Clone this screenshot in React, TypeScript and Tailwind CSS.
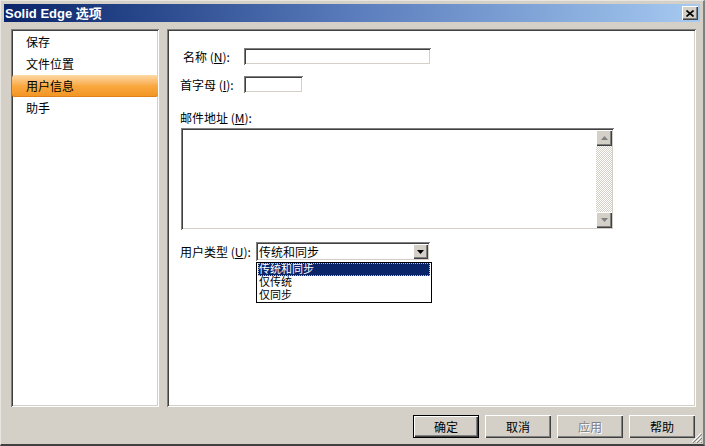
import React from "react";

const cjk = { fontFamily: "'Noto Sans CJK SC', 'Liberation Sans', sans-serif" };
const tight = { fontFamily: "'Liberation Sans', 'Noto Sans CJK SC', sans-serif" };

const sunken =
  "shadow-[inset_1px_1px_0_#808080,inset_-1px_-1px_0_#ffffff,inset_2px_2px_0_#404040,inset_-2px_-2px_0_#d4d0c8]";
const raised =
  "shadow-[inset_1px_1px_0_#ffffff,inset_-1px_-1px_0_#404040,inset_-2px_-2px_0_#808080]";

const pages = ["保存", "文件位置", "用户信息", "助手"];
const active = "用户信息";

const Key = ({ k }: { k: string }) => (
  <>
    {" "}(<span className="underline">{k}</span>):
  </>
);

const Btn = ({
  label,
  primary,
  disabled,
}: {
  label: string;
  primary?: boolean;
  disabled?: boolean;
}) => (
  <div
    className={`w-[66px] h-[23px] flex items-center justify-center text-[12px] bg-[#d4d0c8] ${
      primary
        ? "border border-black shadow-[inset_1px_1px_0_#ffffff,inset_-1px_-1px_0_#404040,inset_-2px_-2px_0_#808080]"
        : raised
    } ${disabled ? "text-[#808080] [text-shadow:1px_1px_0_#ffffff]" : "text-black"}`}
    style={cjk}
  >
    {label}
  </div>
);

const ScrollArrow = ({ up }: { up?: boolean }) => (
  <div className={`w-[16px] h-[16px] bg-[#d4d0c8] flex items-center justify-center ${raised}`}>
    <svg width="7" height="4" viewBox="0 0 7 4">
      {up ? (
        <path d="M3.5 0 L7 4 L0 4 Z" fill="#808080" />
      ) : (
        <path d="M0 0 L7 0 L3.5 4 Z" fill="#808080" />
      )}
    </svg>
  </div>
);

export default function App() {
  return (
    <div
      className="relative w-[705px] h-[446px] bg-[#d4d0c8] flex flex-col border-t border-l border-t-[#e8e6e0] border-l-[#e8e6e0] border-b-2 border-r-2 border-b-[#404040] border-r-[#808080] px-[3px] pt-[3px] overflow-hidden"
      style={cjk}
    >
      {/* title bar */}
      <div className="h-[18px] flex items-center justify-between pl-[1px] pr-[2px] bg-gradient-to-r from-[#0a246a] via-[#5a7cbc] to-[#a6caf0]">
        <span className="text-white font-bold text-[13px] leading-none" style={tight}>
          Solid Edge 选项
        </span>
        <div className={`w-[16px] h-[14px] bg-[#d4d0c8] flex items-center justify-center ${raised}`}>
          <svg width="8" height="7" viewBox="0 0 8 7">
            <path d="M0.5 0.5 L7.5 6.5 M7.5 0.5 L0.5 6.5" stroke="#000" strokeWidth="1.6" />
          </svg>
        </div>
      </div>

      {/* body */}
      <div className="flex mt-[7px] pl-[7px] gap-[8px]">
        <div className={`w-[148px] h-[378px] bg-white py-[1px] px-[1px] ${sunken}`}>
          <div className="pt-[1px]">
            {pages.map((p) => (
              <div
                key={p}
                className={`h-[22px] flex items-center pl-[14px] text-[12px] text-black ${
                  p === active
                    ? "rounded-[3px] bg-gradient-to-b from-[#fdd9a4] via-[#f9a83f] to-[#f29420] shadow-[inset_0_-1px_0_#e0801a]"
                    : ""
                }`}
              >
                {p}
              </div>
            ))}
          </div>
        </div>

        <div className={`relative w-[529px] h-[378px] bg-white pl-[13px] ${sunken}`}>
          <div className="flex items-center mt-[19px] h-[17px]">
            <span className="w-[64px] pl-[3px] text-[12px] text-black leading-none">
              名称<Key k="N" />
            </span>
            <div className={`w-[187px] h-[17px] bg-white ${sunken}`} />
          </div>

          <div className="flex items-center mt-[11px] h-[17px]">
            <span className="w-[64px] text-[12px] text-black leading-none">
              首字母<Key k="I" />
            </span>
            <div className={`w-[59px] h-[17px] bg-white ${sunken}`} />
          </div>

          <div className="mt-[18px] text-[12px] text-black leading-[14px]">
            邮件地址<Key k="M" />
          </div>

          <div className={`mt-[3px] ml-[1px] w-[433px] h-[102px] bg-white flex justify-end p-[2px] ${sunken}`}>
            <div className="w-[16px] flex flex-col bg-[repeating-conic-gradient(#d4d0c8_0%_25%,#ffffff_0%_50%)] bg-[length:2px_2px]">
              <ScrollArrow up />
              <div className="flex-1" />
              <ScrollArrow />
            </div>
          </div>

          <div className="flex items-center mt-[12px] h-[19px]">
            <span className="w-[76px] text-[12px] text-black leading-none">
              用户类型<Key k="U" />
            </span>
            <div className="relative">
              <div className={`w-[174px] h-[19px] bg-white flex items-center justify-between pl-[3px] pr-[2px] ${sunken}`}>
                <span className="text-[12px] text-black leading-none">传统和同步</span>
                <div className={`w-[15px] h-[15px] bg-[#d4d0c8] flex items-center justify-center ${raised}`}>
                  <svg width="7" height="4" viewBox="0 0 7 4">
                    <path d="M0 0 L7 0 L3.5 4 Z" fill="#000" />
                  </svg>
                </div>
              </div>
              <div
                className="absolute left-0 top-[20px] w-[176px] h-[41px] bg-white border border-black flex flex-col"
                style={tight}
              >
                <div className="h-[13px] mx-[1px] bg-[#0a246a] text-white text-[11px] leading-[13px] pl-[1px] outline outline-1 outline-dotted outline-[#c0c0c0] -outline-offset-1">
                  传统和同步
                </div>
                <div className="h-[13px] pl-[2px] text-[11px] leading-[13px] text-black">仅传统</div>
                <div className="h-[13px] pl-[2px] text-[11px] leading-[13px] text-black">仅同步</div>
              </div>
            </div>
          </div>
        </div>
      </div>

      {/* footer */}
      <div className="flex justify-end gap-[6px] mt-[8px] pr-[5px]">
        <Btn label="确定" primary />
        <Btn label="取消" />
        <Btn label="应用" disabled />
        <Btn label="帮助" />
      </div>

      {/* resize grip */}
      <svg className="absolute right-[1px] bottom-[1px]" width="12" height="12" viewBox="0 0 12 12">
        <path d="M11 2 L2 11 M11 6 L6 11 M11 10 L10 11" stroke="#ffffff" strokeWidth="1" />
        <path d="M12 3 L3 12 M12 7 L7 12 M12 11 L11 12" stroke="#808080" strokeWidth="1" />
      </svg>
    </div>
  );
}
